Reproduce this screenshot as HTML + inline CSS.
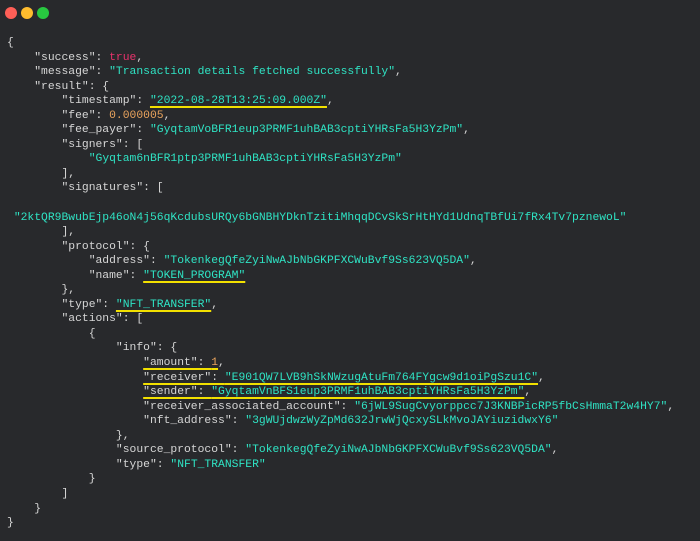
<!DOCTYPE html>
<html><head><meta charset="utf-8"><style>
html,body{margin:0;padding:0;background:#28292c;width:700px;height:541px;overflow:hidden}
.dots{position:absolute;top:7px;left:5px}
.dots span{position:absolute;top:0;width:12px;height:12px;border-radius:50%}
pre{position:absolute;left:7px;top:36px;margin:0;font-family:"Liberation Mono",monospace;font-size:11.35px;line-height:14.55px;color:#d6d6d6;white-space:pre}
.s{color:#2fe3c4}.t{color:#e8326c}.n{color:#e9a35d}
.u{text-decoration:underline;text-decoration-color:#f2e000;text-decoration-thickness:2px;text-underline-offset:3px}
</style></head><body>
<div class="dots"><span style="left:0;background:#fe5f57"></span><span style="left:16px;background:#febc2e"></span><span style="left:32px;background:#28c840"></span></div>
<pre>{
    "success": <span class="t">true</span>,
    "message": <span class="s">"Transaction details fetched successfully"</span>,
    "result": {
        "timestamp": <span class="s u">"2022-08-28T13:25:09.000Z"</span>,
        "fee": <span class="n">0.000005</span>,
        "fee_payer": <span class="s">"GyqtamVoBFR1eup3PRMF1uhBAB3cptiYHRsFa5H3YzPm"</span>,
        "signers": [
            <span class="s">"Gyqtam6nBFR1ptp3PRMF1uhBAB3cptiYHRsFa5H3YzPm"</span>
        ],
        "signatures": [

 <span class="s">"2ktQR9BwubEjp46oN4j56qKcdubsURQy6bGNBHYDknTzitiMhqqDCvSkSrHtHYd1UdnqTBfUi7fRx4Tv7pznewoL"</span>
        ],
        "protocol": {
            "address": <span class="s">"TokenkegQfeZyiNwAJbNbGKPFXCWuBvf9Ss623VQ5DA"</span>,
            "name": <span class="s u">"TOKEN_PROGRAM"</span>
        },
        "type": <span class="s u">"NFT_TRANSFER"</span>,
        "actions": [
            {
                "info": {
                    <span class="u">"amount": <span class="n">1</span></span>,
                    <span class="u">"receiver": <span class="s">"E901QW7LVB9hSkNWzugAtuFm764FYgcw9d1oiPgSzu1C"</span></span>,
                    <span class="u">"sender": <span class="s">"GyqtamVnBFS1eup3PRMF1uhBAB3cptiYHRsFa5H3YzPm"</span></span>,
                    "receiver_associated_account": <span class="s">"6jWL9SugCvyorppcc7J3KNBPicRP5fbCsHmmaT2w4HY7"</span>,
                    "nft_address": <span class="s">"3gWUjdwzWyZpMd632JrwWjQcxySLkMvoJAYiuzidwxY6"</span>
                },
                "source_protocol": <span class="s">"TokenkegQfeZyiNwAJbNbGKPFXCWuBvf9Ss623VQ5DA"</span>,
                "type": <span class="s">"NFT_TRANSFER"</span>
            }
        ]
    }
}</pre>
</body></html>
